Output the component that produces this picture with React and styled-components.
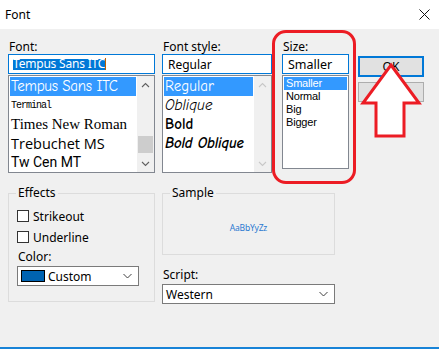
import React from 'react';
import styled, { createGlobalStyle } from 'styled-components';

const Global = createGlobalStyle`
  html, body {
    margin: 0;
    padding: 0;
    background: #f0f0f0;
  }
  * { box-sizing: border-box; }
`

const UI = `"Noto Sans", "Open Sans", Arial, sans-serif`;

const Dialog = styled.div`
  position: relative;
  width: 439px;
  height: 349px;
  display: flex;
  flex-direction: column;
  background: #f0f0f0;
  border-bottom: 2px solid #1883d7;
  font-family: ${UI};
  font-size: 12px;
  color: #000;
  overflow: hidden;
`
const TitleBar = styled.div`
  height: 29px;
  background: #fff;
  display: flex;
  align-items: center;
  justify-content: space-between;
  padding: 0 9px 0 5px;
  .title {
    font-size: 12px;
    line-height: 16px;
  }
`
const Body = styled.div`
  flex: 1;
  padding: 11px 8px 0 8px;
  display: flex;
  flex-direction: column;
`
const TopRow = styled.div`
  display: flex;
  align-items: flex-start;
`
const Column = styled.div`
  display: flex;
  flex-direction: column;
  width: ${p => p.$w}px;
  margin-right: ${p => p.$gap || 0}px;
`
const Label = styled.div`
  height: 14px;
  line-height: 14px;
  font-size: 12px;
  padding-left: 1px;
  margin-top: ${p => p.$mt || 0}px;
`
const TextBox = styled.div`
  height: 20px;
  background: #fff;
  border: 1px solid #0078d7;
  display: flex;
  align-items: center;
  padding-left: ${p => p.$pl || 4}px;
  font-size: ${p => p.$fs || 12}px;
  margin-top: ${p => p.$mt || 0}px;
  .sel {
    background: #0078d7;
    color: #fff;
    line-height: 12px;
    height: 11px;
    display: flex;
    align-items: center;
    letter-spacing: -0.2px;
  }
  .caret {
    width: 1px;
    height: 12px;
    background: #c06000;
  }
`
const ListBox = styled.div`
  height: ${p => p.$h}px;
  margin-top: 1px;
  background: #fff;
  border: 1px solid #828790;
  display: flex;
`
const Items = styled.div`
  flex: 1;
  padding: 1px;
  display: flex;
  flex-direction: column;
  overflow: hidden;
`
const Item = styled.div`
  height: ${p => p.$rh || 19}px;
  line-height: ${p => p.$rh || 19}px;
  padding-left: ${p => p.$pl || 1}px;
  white-space: nowrap;
  font-family: ${p => p.$family || UI};
  font-size: ${p => p.$fs || 15}px;
  font-style: ${p => (p.$italic ? 'italic' : 'normal')};
  font-weight: ${p => (p.$bold ? 700 : 400)};
  letter-spacing: ${p => p.$ls || 0}px;
  background: ${p => (p.$sel ? '#3399ff' : 'transparent')};
  color: ${p => (p.$sel ? '#fff' : '#000')};
`
const ScrollBar = styled.div`
  width: 17px;
  background: #f0f0f0;
  display: flex;
  flex-direction: column;
  justify-content: space-between;
  align-items: center;
  padding: 6px 0 5px;
  position: relative;
  color: ${p => (p.$disabled ? '#c8c8c8' : '#606060')};
`
const Thumb = styled.div`
  position: absolute;
  left: 1px;
  right: 1px;
  top: ${p => p.$top}px;
  height: ${p => p.$h}px;
  background: #cdcdcd;
`
const Buttons = styled.div`
  display: flex;
  flex-direction: column;
  gap: 5px;
  padding-top: 16px;
`
const Button = styled.div`
  width: 66px;
  height: ${p => (p.$default ? 21 : 20)}px;
  display: flex;
  align-items: center;
  justify-content: center;
  background: #e1e1e1;
  border: ${p => (p.$default ? '2px solid #0078d7' : '1px solid #adadad')};
  font-size: 12px;
`
const BottomRow = styled.div`
  display: flex;
  align-items: flex-start;
  margin-top: 13px;
`
const GroupBox = styled.fieldset`
  margin: 0;
  min-width: 0;
  width: ${p => p.$w}px;
  border: 1px solid #dcdcdc;
  padding: ${p => p.$pad};
  display: flex;
  flex-direction: column;
  legend {
    padding: 0 2px;
    margin-left: ${p => p.$lm}px;
    line-height: 14px;
    font-size: 12px;
  }
`
const CheckRow = styled.div`
  display: flex;
  align-items: center;
  height: 12px;
  margin-bottom: 9px;
  gap: 4px;
  .box {
    width: 12px;
    height: 12px;
    border: 1px solid #333;
    background: #fff;
  }
`
const Select = styled.div`
  height: 20px;
  width: ${p => p.$w}px;
  margin-top: 2px;
  background: #fff;
  border: 1px solid #7a7a7a;
  display: flex;
  align-items: center;
  padding: 0 6px 0 ${p => p.$pl || 3}px;
  gap: 3px;
  font-size: 12px;
  .txt { flex: 1; }
`
const Swatch = styled.div`
  width: 24px;
  height: 12px;
  background: #0063b1;
  border: 1px solid #000;
`
const SampleText = styled.div`
  height: 54px;
  display: flex;
  align-items: center;
  justify-content: center;
  font-size: 8.5px;
  color: #2b79d0;
  letter-spacing: -0.2px;
`
const RedFrame = styled.div`
  position: absolute;
  left: 272px;
  top: 30px;
  width: 84px;
  height: 154px;
  border: 3px solid #ec1c24;
  border-radius: 14px;
  pointer-events: none;
`
const ArrowMark = styled.svg`
  position: absolute;
  left: 360px;
  top: 62px;
  overflow: visible;
`

const Chevron = ({ up }) => (
  <svg width="9" height="6" viewBox="0 0 9 6">
    <path d={up ? 'M1 5 L4.5 1.5 L8 5' : 'M1 1 L4.5 4.5 L8 1'} fill="none" stroke="currentColor" strokeWidth="1.1" />
  </svg>
);

const DropArrow = () => (
  <svg width="9" height="6" viewBox="0 0 9 6">
    <path d="M0.5 1 L4.5 5 L8.5 1" fill="none" stroke="#404040" strokeWidth="1" />
  </svg>
);

const CASUAL = `"Comic Neue", "Open Sans", sans-serif`;
const ARIAL = `"Liberation Sans", Arial, sans-serif`;

export default function App() {
  return (
    <Dialog>
      <Global />
      <TitleBar>
        <span className="title">Font</span>
        <svg width="11" height="11" viewBox="0 0 11 11">
          <path d="M0.5 0.5 L10.5 10.5 M10.5 0.5 L0.5 10.5" stroke="#111" strokeWidth="1" />
        </svg>
      </TitleBar>
      <Body>
        <TopRow>
          <Column $w={147} $gap={7}>
            <Label>Font:</Label>
            <TextBox $pl={4}>
              <span className="sel">Tempus Sans ITC</span>
              <span className="caret" />
            </TextBox>
            <ListBox $h={98}>
              <Items>
                <Item $sel $family={CASUAL} $fs={15} $ls={-0.3}>Tempus Sans ITC</Item>
                <Item $family={`"Liberation Mono", monospace`} $fs={10} $ls={-1}>Terminal</Item>
                <Item $family={`"Liberation Serif", serif`} $fs={15}>Times New Roman</Item>
                <Item $family={`"Open Sans", sans-serif`} $fs={14.5}>Trebuchet MS</Item>
                <Item $family={`Roboto, sans-serif`} $fs={14}>Tw Cen MT</Item>
              </Items>
              <ScrollBar>
                <Chevron up />
                <Thumb $top={60} $h={17} />
                <Chevron />
              </ScrollBar>
            </ListBox>
          </Column>
          <Column $w={110} $gap={10}>
            <Label>Font style:</Label>
            <TextBox $pl={5}>Regular</TextBox>
            <ListBox $h={98}>
              <Items>
                <Item $sel $family={CASUAL} $fs={15}>Regular</Item>
                <Item $family={CASUAL} $fs={15} $italic>Oblique</Item>
                <Item $family={CASUAL} $fs={15} $bold>Bold</Item>
                <Item $family={CASUAL} $fs={15} $bold $italic $ls={-0.2}>Bold Oblique</Item>
              </Items>
              <ScrollBar $disabled>
                <Chevron up />
                <Chevron />
              </ScrollBar>
            </ListBox>
          </Column>
          <Column $w={67} $gap={9}>
            <Label>Size:</Label>
            <TextBox $pl={5} $fs={12.5}>Smaller</TextBox>
            <ListBox $h={94}>
              <Items>
                <Item $sel $rh={13} $fs={11} $pl={2} $ls={-0.2} $family={ARIAL}>Smaller</Item>
                <Item $rh={13} $fs={11} $pl={2} $ls={-0.2} $family={ARIAL}>Normal</Item>
                <Item $rh={13} $fs={11} $pl={2} $ls={-0.2} $family={ARIAL}>Big</Item>
                <Item $rh={13} $fs={11} $pl={2} $ls={-0.2} $family={ARIAL}>Bigger</Item>
              </Items>
            </ListBox>
          </Column>
          <Buttons>
            <Button $default>OK</Button>
            <Button>Cancel</Button>
          </Buttons>
        </TopRow>
        <BottomRow>
          <GroupBox $w={147} $pad="10px 8px 15px 8px" $lm={-1} style={{ marginRight: 7 }}>
            <legend>Effects</legend>
            <CheckRow><span className="box" />Strikeout</CheckRow>
            <CheckRow><span className="box" />Underline</CheckRow>
            <Label $mt={-2}>Color:</Label>
            <Select $w={122} $pl={3}>
              <Swatch />
              <span className="txt">Custom</span>
              <DropArrow />
            </Select>
          </GroupBox>
          <Column $w={173}>
            <GroupBox $w={173} $pad="0" $lm={7}>
              <legend>Sample</legend>
              <SampleText>AaBbYyZz</SampleText>
            </GroupBox>
            <Label $mt={13}>Script:</Label>
            <Select $w={173}>
              <span className="txt">Western</span>
              <DropArrow />
            </Select>
          </Column>
        </BottomRow>
      </Body>
      <RedFrame />
      <ArrowMark width="62" height="78" viewBox="0 0 62 78">
        <polygon
          points="31,3 59,41 44,41 44,74 16,74 16,41 3,41"
          fill="#fff"
          stroke="#ec1c24"
          strokeWidth="3"
          strokeLinejoin="miter"
        />
      </ArrowMark>
    </Dialog>
  );
}
